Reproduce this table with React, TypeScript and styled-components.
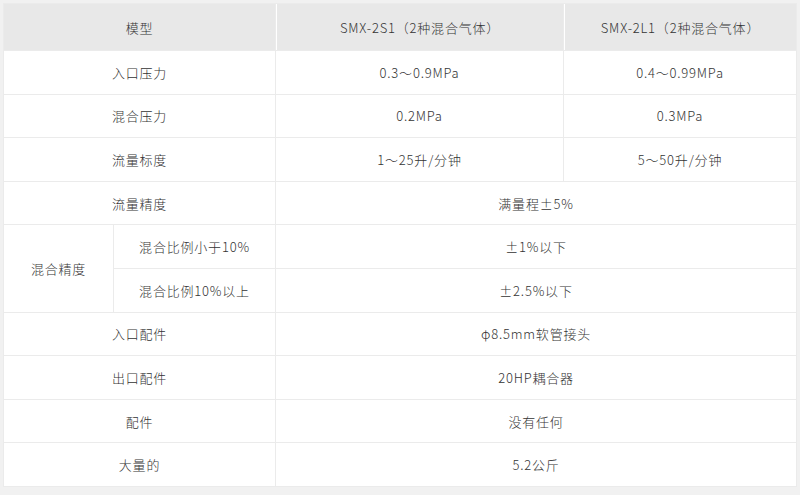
import React from 'react';
import styled, { createGlobalStyle } from 'styled-components';

type Row = {
	label: string;
	values: string[];
};

const rows: Row[] = [
	{ label: '入口压力', values: ['0.3～0.9MPa', '0.4～0.99MPa'] },
	{ label: '混合压力', values: ['0.2MPa', '0.3MPa'] },
	{ label: '流量标度', values: ['1～25升/分钟', '5～50升/分钟'] },
	{ label: '流量精度', values: ['满量程±5%'] },
];

const mixRows: Row[] = [
	{ label: '混合比例小于10%', values: ['±1%以下'] },
	{ label: '混合比例10%以上', values: ['±2.5%以下'] },
];

const tailRows: Row[] = [
	{ label: '入口配件', values: ['φ8.5mm软管接头'] },
	{ label: '出口配件', values: ['20HP耦合器'] },
	{ label: '配件', values: ['没有任何'] },
	{ label: '大量的', values: ['5.2公斤'] },
];

function renderRow(r: Row) {
	return (
		<React.Fragment key={r.label}>
			<Cell $col="1 / 3">{r.label}</Cell>
			{r.values.length === 1 ? (
				<Cell $col="3 / 5">{r.values[0]}</Cell>
			) : (
				r.values.map((v, i) => (
					<Cell key={i} $col={i === 0 ? '3' : '4'}>
						{v}
					</Cell>
				))
			)}
		</React.Fragment>
	);
}

export default function App() {
	return (
		<>
			<GlobalStyle />
			<Page>
				<Table>
					<HeadCell $col="1 / 3">模型</HeadCell>
					<HeadCell $col="3" $divider>
						SMX-2S1（2种混合气体）
					</HeadCell>
					<HeadCell $col="4" $divider>
						SMX-2L1（2种混合气体）
					</HeadCell>
					{rows.map(renderRow)}
					<Cell $col="1" $row="span 2">
						混合精度
					</Cell>
					{mixRows.map((r) => (
						<React.Fragment key={r.label}>
							<Cell $col="2">{r.label}</Cell>
							<Cell $col="3 / 5">{r.values[0]}</Cell>
						</React.Fragment>
					))}
					{tailRows.map(renderRow)}
				</Table>
			</Page>
		</>
	);
}

const GlobalStyle = createGlobalStyle`
	html, body {
		margin: 0;
		padding: 0;
		background: #f1f1f1;
	}
	body {
		font-family: 'Noto Sans CJK SC', 'Liberation Sans', sans-serif;
	}
`;

const Page = styled.div`
	width: 800px;
	height: 495px;
	padding: 3px 0 0 3px;
	box-sizing: border-box;
	background: #f1f1f1;
`;

const Table = styled.div`
	display: grid;
	grid-template-columns: 109px 161px 287px 232px;
	grid-template-rows: 46px repeat(10, 1fr);
	gap: 1px;
	padding: 1px;
	width: 794px;
	height: 484px;
	box-sizing: border-box;
	background: #ebebeb;
`;

const Cell = styled.div<{ $col: string; $row?: string }>`
	grid-column: ${(p) => p.$col};
	grid-row: ${(p) => p.$row ?? 'auto'};
	display: flex;
	align-items: center;
	justify-content: center;
	background: #fff;
	color: #333;
	font-size: 13px;
	font-weight: 300;
	letter-spacing: 0.8px;
`;

const HeadCell = styled(Cell)<{ $divider?: boolean }>`
	background: #e8e8e8;
	border-left: ${(p) => (p.$divider ? '1px solid #fff' : 'none')};
`;
